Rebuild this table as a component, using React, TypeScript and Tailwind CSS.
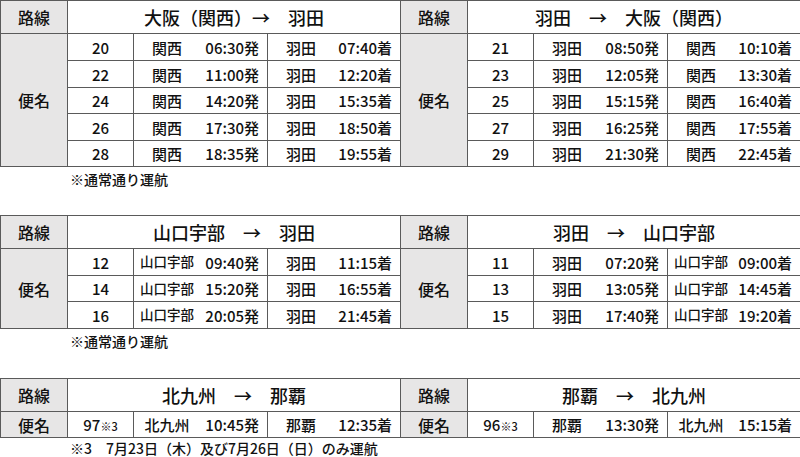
type Leg = { st: string; time: string; small?: boolean };
type Flight = { no: string; mark?: boolean; dep: Leg; arr: Leg };
type Side = { title: string; flights: Flight[] };

const f = (no: string, a: string, at: string, b: string, bt: string, mark = false): Flight => ({
  no,
  mark,
  dep: { st: a, time: at + "発", small: a.length > 3 },
  arr: { st: b, time: bt + "着", small: b.length > 3 },
});

const sections: { left: Side; right: Side; note: string; heights: string[]; box: string; pad: string }[] = [
  {
    left: {
      title: "大阪（関西）→　羽田",
      flights: [
        f("20", "関西", "06:30", "羽田", "07:40"),
        f("22", "関西", "11:00", "羽田", "12:20"),
        f("24", "関西", "14:20", "羽田", "15:35"),
        f("26", "関西", "17:30", "羽田", "18:50"),
        f("28", "関西", "18:35", "羽田", "19:55"),
      ],
    },
    right: {
      title: "羽田　→　大阪（関西）",
      flights: [
        f("21", "羽田", "08:50", "関西", "10:10"),
        f("23", "羽田", "12:05", "関西", "13:30"),
        f("25", "羽田", "15:15", "関西", "16:40"),
        f("27", "羽田", "16:25", "関西", "17:55"),
        f("29", "羽田", "21:30", "関西", "22:45"),
      ],
    },
    note: "※通常通り運航",
    heights: ["h-[27px]", "h-[27px]", "h-[26px]", "h-[27px]", "h-[26px]"],
    box: "h-[215px]",
    pad: "pt-[5px]",
  },
  {
    left: {
      title: "山口宇部　→　羽田",
      flights: [
        f("12", "山口宇部", "09:40", "羽田", "11:15"),
        f("14", "山口宇部", "15:20", "羽田", "16:55"),
        f("16", "山口宇部", "20:05", "羽田", "21:45"),
      ],
    },
    right: {
      title: "羽田　→　山口宇部",
      flights: [
        f("11", "羽田", "07:20", "山口宇部", "09:00"),
        f("13", "羽田", "13:05", "山口宇部", "14:45"),
        f("15", "羽田", "17:40", "山口宇部", "19:20"),
      ],
    },
    note: "※通常通り運航",
    heights: ["h-[27px]", "h-[26px]", "h-[27px]"],
    box: "h-[163px]",
    pad: "pt-[5px]",
  },
  {
    left: {
      title: "北九州　→　那覇",
      flights: [f("97", "北九州", "10:45", "那覇", "12:35", true)],
    },
    right: {
      title: "那覇　→　北九州",
      flights: [f("96", "那覇", "13:30", "北九州", "15:15", true)],
    },
    note: "※3　7月23日（木）及び7月26日（日）のみ運航",
    heights: ["h-[26px]"],
    box: "h-[79px]",
    pad: "pt-[3px]",
  },
];

const cell = "border border-[#5a5a5a] p-0 align-middle";
const shade = "bg-[#e7e6e6] text-center text-[16px]";

function LegCell({ leg }: { leg: Leg }) {
  return (
    <td className={cell}>
      <div className="flex items-center pr-[8px]">
        <span className={`w-[66px] text-center ${leg.small ? "text-[13.5px]" : ""}`}>{leg.st}</span>
        <span className="ml-auto">{leg.time}</span>
      </div>
    </td>
  );
}

function SideCells({ side, i, span }: { side: Side; i: number; span: number }) {
  const fl = side.flights[i];
  return (
    <>
      {i === 0 && (
        <td rowSpan={span} className={`${cell} ${shade}`}>
          便名
        </td>
      )}
      <td className={`${cell} text-center`}>
        {fl.no}
        {fl.mark && <span className="text-[11px]">※3</span>}
      </td>
      <LegCell leg={fl.dep} />
      <LegCell leg={fl.arr} />
    </>
  );
}

export default function App() {
  return (
    <div className="w-[800px] h-[457px] overflow-hidden bg-white text-[15px] font-medium leading-none text-[#111] font-['Noto_Sans_CJK_JP','Noto_Sans',sans-serif]">
      {sections.map((s, k) => (
        <div key={k} className={s.box}>
          <table className="w-[800px] table-fixed border-collapse">
            <colgroup>
              <col className="w-[67px]" />
              <col className="w-[66px]" />
              <col className="w-[134px]" />
              <col className="w-[133px]" />
              <col className="w-[67px]" />
              <col className="w-[66px]" />
              <col className="w-[134px]" />
              <col className="w-[133px]" />
            </colgroup>
            <tbody>
              <tr className="h-[33px]">
                <td className={`${cell} ${shade}`}>路線</td>
                <td colSpan={3} className={`${cell} text-center text-[18px]`}>
                  {s.left.title}
                </td>
                <td className={`${cell} ${shade}`}>路線</td>
                <td colSpan={3} className={`${cell} text-center text-[18px]`}>
                  {s.right.title}
                </td>
              </tr>
              {s.heights.map((h, i) => (
                <tr key={i} className={h}>
                  <SideCells side={s.left} i={i} span={s.heights.length} />
                  <SideCells side={s.right} i={i} span={s.heights.length} />
                </tr>
              ))}
            </tbody>
          </table>
          <p className={`pl-[70px] ${s.pad} text-[14px] leading-[14px]`}>{s.note}</p>
        </div>
      ))}
    </div>
  );
}
